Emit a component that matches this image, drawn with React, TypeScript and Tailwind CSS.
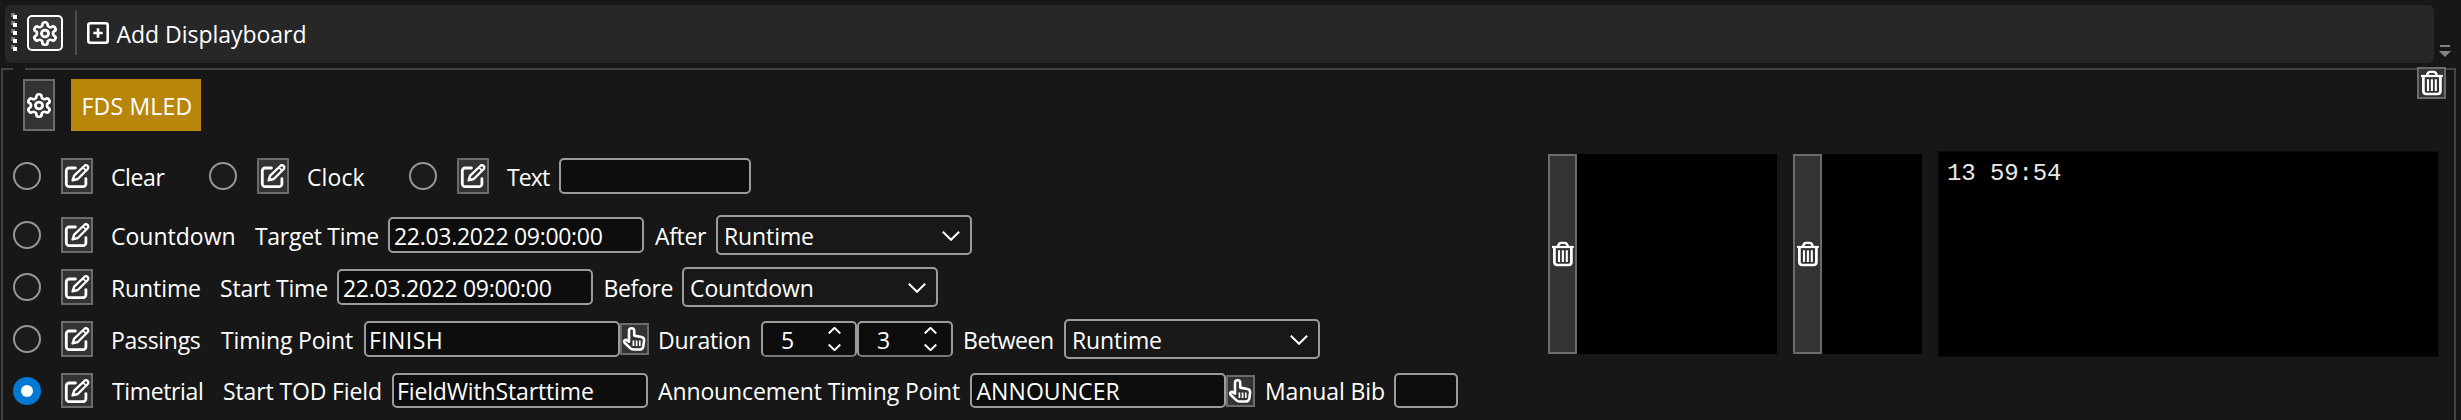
import type { ReactNode } from "react";
import clsx from "clsx";

function Gear() {
  return (
    <svg className="h-[27px] w-7 shrink-0" viewBox="0 0 24 24" preserveAspectRatio="none" fill="none" stroke="white" strokeWidth="2.4" strokeLinejoin="round">
      <path d="M12.22 2h-.44a2 2 0 0 0-2 2v.18a2 2 0 0 1-1 1.73l-.43.25a2 2 0 0 1-2 0l-.15-.08a2 2 0 0 0-2.73.73l-.22.38a2 2 0 0 0 .73 2.73l.15.1a2 2 0 0 1 1 1.72v.51a2 2 0 0 1-1 1.74l-.15.09a2 2 0 0 0-.73 2.73l.22.38a2 2 0 0 0 2.73.73l.15-.08a2 2 0 0 1 2 0l.43.25a2 2 0 0 1 1 1.73V20a2 2 0 0 0 2 2h.44a2 2 0 0 0 2-2v-.18a2 2 0 0 1 1-1.73l.43-.25a2 2 0 0 1 2 0l.15.08a2 2 0 0 0 2.73-.73l.22-.39a2 2 0 0 0-.73-2.73l-.15-.08a2 2 0 0 1-1-1.74v-.5a2 2 0 0 1 1-1.74l.15-.09a2 2 0 0 0 .73-2.73l-.22-.38a2 2 0 0 0-2.73-.73l-.15.08a2 2 0 0 1-2 0l-.43-.25a2 2 0 0 1-1-1.73V4a2 2 0 0 0-2-2z" />
      <circle cx="12" cy="12" r="3" strokeWidth="2.5" />
    </svg>
  );
}

function Pencil() {
  return (
    <svg className="h-9 w-8 shrink-0" viewBox="0 0 32 36" fill="none" stroke="white" strokeLinejoin="round" strokeLinecap="round">
      <path d="M14.4 10H8.2A2.9 2.9 0 0 0 5.3 12.9V25.8A2.9 2.9 0 0 0 8.2 28.7H22A2.9 2.9 0 0 0 24.9 25.8V20.6" strokeWidth="2.8" />
      <path d="M11.6 22.4 13.2 17.6 23.3 8A2.2 2.2 0 0 1 26.7 11L16.8 21Z" strokeWidth="2.4" />
      <path d="M22 9.5 25 12.6" strokeWidth="1.7" />
    </svg>
  );
}

function Hand() {
  return (
    <svg className="h-8 w-[29px] shrink-0" viewBox="0 0 29 32" fill="none" stroke="white" strokeLinejoin="round" strokeLinecap="round">
      <path d="M9 18.6V7.9A2.6 2.6 0 0 1 14.2 7.9V12.6L21.4 14A3.4 3.4 0 0 1 24.1 17.4L23.3 23.4A3.8 3.8 0 0 1 19.6 26.5H13.6A4.6 4.6 0 0 1 10.2 25.1L4.6 19.7C3.6 18.2 4.4 16.6 6.2 16.8Z" strokeWidth="2.6" />
      <path d="M13.4 17.5V23M16.6 17.5V23M19.8 17.5V23" strokeWidth="1.7" strokeLinecap="butt" />
    </svg>
  );
}

function Trash() {
  return (
    <svg className="h-8 w-[29px] shrink-0" viewBox="0 0 29 32" fill="none" stroke="white" strokeLinejoin="round">
      <path d="M4 9H25.8" strokeWidth="2.2" />
      <path d="M10 8.6C10.3 6.2 11.6 4.9 13.2 4.9H16.6C18.2 4.9 19.5 6.2 19.8 8.6" strokeWidth="2.4" />
      <path d="M6.4 9.5V24.2A2.9 2.9 0 0 0 9.3 27H20.5A2.9 2.9 0 0 0 23.4 24.2V9.5" strokeWidth="2.7" />
      <path d="M11 12.3V24M14.9 12.3V24M18.8 12.3V24" strokeWidth="2.1" />
    </svg>
  );
}

function Chevron({ className, up }: { className: string; up?: boolean }) {
  return (
    <svg className={className} viewBox="0 0 18 10" fill="none" stroke="white" strokeWidth="2">
      <path d={up ? "M.8 9.2 9 1.2l8.2 8" : "M.8.8 9 8.8l8.2-8"} vectorEffect="non-scaling-stroke" />
    </svg>
  );
}

function Radio({ checked }: { checked?: boolean }) {
  return checked ? (
    <span className="flex size-7 shrink-0 items-center justify-center rounded-full bg-[#0078d4]">
      <span className="size-3 rounded-full bg-white" />
    </span>
  ) : (
    <span className="size-7 shrink-0 rounded-full border-2 border-[#969696] bg-[#1b1b1b]" />
  );
}

function Edit({ className = "h-9" }: { className?: string }) {
  return (
    <button className={clsx("ml-5 flex w-8 shrink-0 items-center justify-center border-2 border-[#6b6b6b] bg-[#333]", className)}>
      <Pencil />
    </button>
  );
}

function Label({ className, children }: { className: string; children: ReactNode }) {
  return <span className={clsx("shrink-0 pt-0.5 whitespace-nowrap", className)}>{children}</span>;
}

function Field({ className, children }: { className: string; children?: ReactNode }) {
  return (
    <span className={clsx("flex shrink-0 items-center rounded-[5px] border-2 border-[#9b9b9b] bg-[#0d0d0d] pt-0.5 whitespace-nowrap", className)}>
      {children}
    </span>
  );
}

function Select({ className, children }: { className: string; children: ReactNode }) {
  return (
    <span className={clsx("flex h-10 w-64 shrink-0 items-center justify-between rounded-[5px] border-2 border-[#9b9b9b] bg-[#181818] pr-2.5 pl-1.5", className)}>
      <span className="pt-0.5">{children}</span>
      <Chevron className="mt-0.5 h-2.5 w-[18px]" />
    </span>
  );
}

function Spin({ children }: { children: ReactNode }) {
  return (
    <span className="flex h-9 w-24 shrink-0 items-center justify-between rounded-[5px] border-2 border-[#9b9b9b] border-b-[#777] bg-[#0d0d0d] pr-3.5 pl-[18px]">
      <span className="pt-0.5">{children}</span>
      <span className="flex flex-col gap-2.5">
        <Chevron up className="h-[7px] w-[13px]" />
        <Chevron className="h-[7px] w-[13px]" />
      </span>
    </span>
  );
}

function Pick() {
  return (
    <button className="flex h-8 w-[29px] shrink-0 items-center justify-center border-2 border-[#6b6b6b] bg-[#333]">
      <Hand />
    </button>
  );
}

function Panel({ className }: { className: string }) {
  return (
    <div className={clsx("mt-[23px] flex h-[200px] shrink-0 bg-black", className)}>
      <button className="flex w-[29px] items-center justify-center border-2 border-[#6b6b6b] bg-[#333]">
        <Trash />
      </button>
    </div>
  );
}

export default function App() {
  return (
    <div className="h-[420px] w-[2461px] overflow-hidden bg-[#171717] pt-[5px] font-['Open_Sans',sans-serif] text-[23px] leading-[31px] text-white">
      <div className="flex h-[58px]">
        <header className="ml-[5px] flex w-[2429px] items-center rounded-md bg-[#272727] pl-1.5">
          <svg className="-mt-1 h-[38px] w-1.5" viewBox="0 0 6 38">
            {[0, 8, 16, 24, 32].map((y) => (
              <g key={y}>
                <path d={`M0 ${y}h4v4h-4z`} fill="#777" />
                <path d={`M2 ${y + 2}h4v4h-4z`} fill="#fff" />
              </g>
            ))}
          </svg>
          <button className="-mt-0.5 ml-2.5 flex size-9 items-center justify-center rounded-[5px] border-2 border-white bg-[#3a3a3a]">
            <Gear />
          </button>
          <div className="-mt-0.5 ml-3 h-11 w-0.5 bg-[#4d4d4d]" />
          <svg className="-mt-0.5 ml-2.5 size-[22px]" viewBox="0 0 22 22" fill="none" stroke="white" strokeWidth="2.6">
            <rect x="1.3" y="1.3" width="19.4" height="19.4" rx="2" />
            <path d="M6.3 11h9.4M11 6.3v9.4" />
          </svg>
          <Label className="-mt-0.5 ml-[7.5px] tracking-[-0.03px]">Add Displayboard</Label>
        </header>
        <svg className="mt-10 ml-[5px] size-3" viewBox="0 0 12 12" fill="#858585">
          <path d="M1 0h10v2H1zM0 6h12L6 12z" />
        </svg>
      </div>

      <main className="relative mt-[5px] ml-px h-[380px] w-[2455px] border-2 border-[#444]">
        <span className="absolute -top-0.5 left-2.5 h-0.5 w-3 bg-[#171717]" />
        <button className="absolute -top-[3px] left-[2414px] flex h-8 w-[29px] items-center justify-center border-2 border-[#6b6b6b] bg-[#333]">
          <Trash />
        </button>

        <div className="mt-[9px] flex h-[52px] pl-5">
          <button className="flex w-8 items-center justify-center border-2 border-[#6b6b6b] bg-[#333]">
            <Gear />
          </button>
          <div className="ml-4 flex w-[130px] items-center bg-[#b8860b] pt-0.5 pl-[10.5px] tracking-[0.2px]">FDS MLED</div>
        </div>

        <div className="flex">
          <div className="flex w-[1545px] shrink-0 flex-col pt-[25px] pl-2.5">
            <div className="flex h-10 items-center">
              <Radio />
              <Edit />
              <Label className="ml-[17px] w-[99px] pl-px tracking-[-0.4px]">Clear</Label>
              <Radio />
              <Edit />
              <Label className="ml-[17px] w-[103px] pl-px tracking-[0.1px]">Clock</Label>
              <Radio />
              <Edit />
              <Label className="ml-[17px] w-[53px] pl-px tracking-[-0.9px]">Text</Label>
              <Field className="h-9 w-48" />
            </div>
            <div className="mt-[19px] flex h-10 items-center">
              <Radio />
              <Edit />
              <Label className="ml-[17px] w-[145px] pl-px">Countdown</Label>
              <Label className="w-[133px] tracking-[-0.3px]">Target Time</Label>
              <Field className="h-9 w-64 pl-1 tracking-[-0.3px]">22.03.2022 09:00:00</Field>
              <Label className="w-[72px] pl-[11px] tracking-[-0.35px]">After</Label>
              <Select className="tracking-[-0.1px]">Runtime</Select>
            </div>
            <div className="mt-3 flex h-10 items-center">
              <Radio />
              <Edit />
              <Label className="ml-[17px] w-[110px] pl-px tracking-[-0.1px]">Runtime</Label>
              <Label className="w-[117px] tracking-[-0.2px]">Start Time</Label>
              <Field className="h-9 w-64 pl-1 tracking-[-0.3px]">22.03.2022 09:00:00</Field>
              <Label className="w-[89px] pl-[10.5px] tracking-[-0.35px]">Before</Label>
              <Select className="tracking-[-0.1px]">Countdown</Select>
            </div>
            <div className="mt-3 flex h-10 items-center">
              <Radio />
              <Edit />
              <Label className="ml-[17px] w-[111px] pl-px tracking-[-0.3px]">Passings</Label>
              <Label className="w-[143px] tracking-[-0.16px]">Timing Point</Label>
              <Field className="h-9 w-64 pl-[3px] tracking-[0.4px]">FINISH</Field>
              <Pick />
              <Label className="w-28 pl-[9px] tracking-[-0.26px]">Duration</Label>
              <Spin>5</Spin>
              <Spin>3</Spin>
              <Label className="w-[111px] pl-2.5 tracking-[-0.44px]">Between</Label>
              <Select className="tracking-[-0.1px]">Runtime</Select>
            </div>
            <div className="mt-3 flex h-[39px] items-center">
              <Radio checked />
              <Edit className="h-[35px]" />
              <Label className="ml-[17px] w-[113px] pl-0.5 tracking-[-0.36px]">Timetrial</Label>
              <Label className="w-[169px] tracking-[-0.13px]">Start TOD Field</Label>
              <Field className="h-[35px] w-64 pl-[3px] tracking-[-0.14px]">FieldWithStarttime</Field>
              <Label className="w-[322px] pl-2.5 tracking-[-0.12px]">Announcement Timing Point</Label>
              <Field className="h-[35px] w-64 pl-[4.5px] tracking-[0.07px]">ANNOUNCER</Field>
              <Pick />
              <Label className="w-[139px] pl-2.5 tracking-[-0.1px]">Manual Bib</Label>
              <Field className="h-[35px] w-16" />
            </div>
          </div>
          <Panel className="w-[229px]" />
          <Panel className="ml-4 w-[129px]" />
          <div className="mt-5 ml-4 h-[206px] w-[501px] shrink-0 border border-[#0a0a0a] bg-black pt-[9px] pl-2 font-['Liberation_Mono',monospace] text-2xl leading-[26px] tracking-[-0.1px] text-[#e8e8e8]">
            13 59:54
          </div>
        </div>
      </main>
    </div>
  );
}
